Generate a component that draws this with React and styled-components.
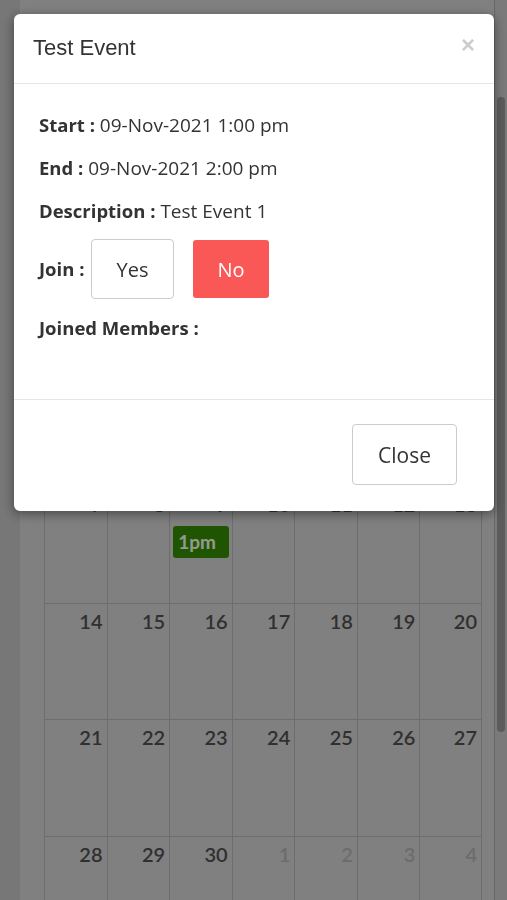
import React from 'react';
import styled, { createGlobalStyle } from 'styled-components';

const GlobalStyle = createGlobalStyle`
  html, body {
    margin: 0;
    padding: 0;
    height: 100%;
    overflow: hidden;
  }
  body {
    font-family: "Open Sans", Lato, sans-serif;
    color: #333;
  }
  * { box-sizing: border-box; }
`;

const weeks = [
  [31, 1, 2, 3, 4, 5, 6],
  [7, 8, 9, 10, 11, 12, 13],
  [14, 15, 16, 17, 18, 19, 20],
  [21, 22, 23, 24, 25, 26, 27],
  [28, 29, 30, 1, 2, 3, 4],
];

const dayNames = ['Sun', 'Mon', 'Tue', 'Wed', 'Thu', 'Fri', 'Sat'];

export default function App() {
  return (
    <>
      <GlobalStyle />
      <Page>
        <Gutter />
        <Main>
          <Toolbar>
            <MonthTitle>November 2021</MonthTitle>
          </Toolbar>
          <HeadRow>
            {dayNames.map((d) => (
              <HeadCell key={d}>{d}</HeadCell>
            ))}
          </HeadRow>
          {weeks.map((week, wi) => (
            <Week key={wi}>
              {week.map((day, di) => {
                const other = (wi === 0 && di === 0) || (wi === 4 && di > 2);
                return (
                  <Day key={di}>
                    <DayNum $other={other}>{day}</DayNum>
                    {wi === 1 && day === 9 && <Chip>1pm</Chip>}
                  </Day>
                );
              })}
            </Week>
          ))}
        </Main>
        <ScrollTrack>
          <ScrollThumb />
        </ScrollTrack>
      </Page>

      <Backdrop />
      <Modal>
        <ModalHeader>
          <ModalTitle>Test Event</ModalTitle>
          <CloseX>×</CloseX>
        </ModalHeader>
        <ModalBody>
          <InfoLine>
            <Label>Start :</Label> 09-Nov-2021 1:00 pm
          </InfoLine>
          <InfoLine>
            <Label>End :</Label> 09-Nov-2021 2:00 pm
          </InfoLine>
          <InfoLine>
            <Label>Description :</Label> Test Event 1
          </InfoLine>
          <JoinRow>
            <JoinLabel>Join :</JoinLabel>
            <JoinButton>Yes</JoinButton>
            <JoinButton $active>No</JoinButton>
          </JoinRow>
          <InfoLine>
            <Label>Joined Members :</Label>
          </InfoLine>
        </ModalBody>
        <ModalFooter>
          <FooterButton>Close</FooterButton>
        </ModalFooter>
      </Modal>
    </>
  );
}

const Page = styled.div`
  display: flex;
  height: 100vh;
  background: #c6c6c6;
`;

const Gutter = styled.div`
  width: 20px;
  flex-shrink: 0;
`;

const Main = styled.div`
  flex: 1;
  background: #d6d6d6;
  padding: 24px 12px 0 24px;
  overflow: hidden;
`;

const Toolbar = styled.div`
  height: 316px;
  display: flex;
  align-items: flex-start;
  justify-content: center;
  padding-top: 40px;
`;

const MonthTitle = styled.h2`
  margin: 0;
  font-size: 24px;
  color: #505050;
`;

const HeadRow = styled.div`
  display: grid;
  grid-template-columns: repeat(7, 1fr);
  height: 29.5px;
  border-top: 1px solid #b6b6b6;
`;

const HeadCell = styled.div`
  text-align: center;
  font-weight: 700;
  font-size: 15px;
  line-height: 28px;
  color: #505050;
  border-left: 1px solid #b6b6b6;
  &:last-child { border-right: 1px solid #b6b6b6; }
`;

const Week = styled.div`
  display: grid;
  grid-template-columns: repeat(7, 1fr);
  height: 116.5px;
  border-top: 1px solid #b6b6b6;
`;

const Day = styled.div`
  border-left: 1px solid #b6b6b6;
  &:last-child { border-right: 1px solid #b6b6b6; }
`;

const DayNum = styled.div`
  text-align: right;
  padding: 5px 4px 0 0;
  font-family: Lato, "Open Sans", sans-serif;
  font-size: 20px;
  line-height: 24px;
  font-weight: 600;
  color: ${(p) => (p.$other ? '#b4b4b4' : '#505050')};
`;

const Chip = styled.div`
  margin: 10px 3px 0 3px;
  height: 32px;
  padding-left: 5px;
  border-radius: 3px;
  background: #348e00;
  color: #f4fff0;
  font-family: Lato, "Open Sans", sans-serif;
  font-size: 19px;
  font-weight: 700;
  line-height: 32px;
`;

const ScrollTrack = styled.div`
  width: 13px;
  flex-shrink: 0;
  background: #cbcbcb;
  border-left: 1px solid #acacac;
  padding: 97px 2px 0 2px;
`;

const ScrollThumb = styled.div`
  height: 635px;
  border-radius: 4px;
  background: #9a9a9a;
`;

const Backdrop = styled.div`
  position: fixed;
  inset: 0;
  background: rgba(0, 0, 0, 0.4);
`;

const Modal = styled.div`
  position: fixed;
  top: 14px;
  left: 14px;
  width: 480px;
  background: #fff;
  border-radius: 6px;
  box-shadow: 0 3px 12px rgba(0, 0, 0, 0.45);
`;

const ModalHeader = styled.div`
  height: 70px;
  display: flex;
  align-items: center;
  justify-content: space-between;
  padding: 0 19px;
  border-bottom: 1px solid #e5e5e5;
`;

const ModalTitle = styled.h4`
  margin: 0 0 2px;
  font-family: "Liberation Sans", Arial, sans-serif;
  font-weight: 400;
  font-size: 22px;
  color: #333;
`;

const CloseX = styled.span`
  font-family: "Liberation Sans", Arial, sans-serif;
  font-size: 24px;
  font-weight: 700;
  color: #cdcdcd;
  margin-bottom: 8px;
`;

const ModalBody = styled.div`
  padding: 29px 25px 59px;
`;

const InfoLine = styled.div`
  font-size: 19px;
  line-height: 24px;
  color: #333;
  margin-bottom: 19px;
  &:last-child { margin-bottom: 0; }
`;

const Label = styled.b`
  font-weight: 700;
  font-size: 18.5px;
`;

const JoinRow = styled.div`
  display: flex;
  align-items: center;
  margin: -3px 0 17px;
`;

const JoinLabel = styled.b`
  font-size: 18.5px;
  font-weight: 700;
  width: 52px;
  margin-top: -2px;
`;

const JoinButton = styled.button`
  font-family: "Open Sans", Lato, sans-serif;
  font-size: 20px;
  width: ${(p) => (p.$active ? '76px' : '83px')};
  height: ${(p) => (p.$active ? '58px' : '60px')};
  margin-left: ${(p) => (p.$active ? '19px' : '0')};
  border-radius: ${(p) => (p.$active ? '3px' : '4px')};
  border: ${(p) => (p.$active ? 'none' : '1px solid #ccc')};
  background: ${(p) => (p.$active ? '#fa5757' : '#fff')};
  color: ${(p) => (p.$active ? '#fff' : '#333')};
  padding: 0;
`;

const ModalFooter = styled.div`
  display: flex;
  justify-content: flex-end;
  padding: 24px 37px 26px;
  border-top: 1px solid #e5e5e5;
`;

const FooterButton = styled.button`
  width: 105px;
  height: 61px;
  padding: 0;
  border: 1px solid #ccc;
  border-radius: 4px;
  background: #fff;
  color: #333;
  font-family: "Open Sans", Lato, sans-serif;
  font-size: 21px;
`;
